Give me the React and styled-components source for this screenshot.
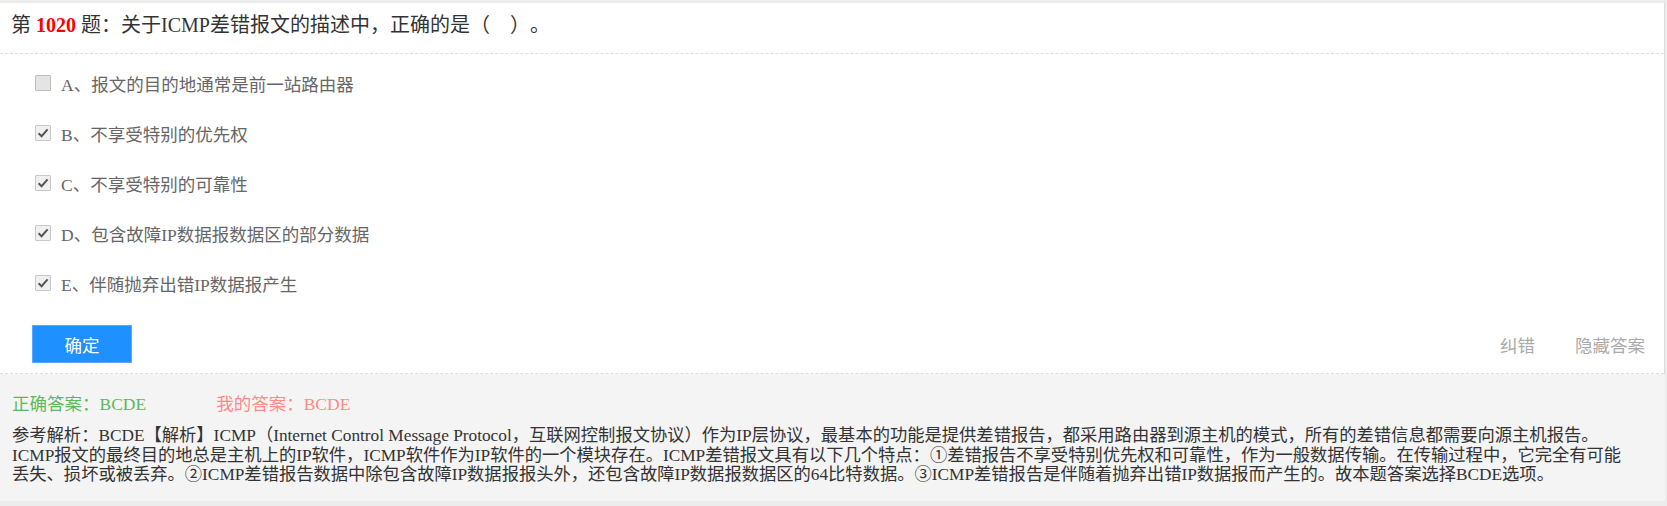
import React from "react";
import styled, { createGlobalStyle } from "styled-components";

const GlobalStyle = createGlobalStyle`
  html, body {
    margin: 0;
    padding: 0;
    background: #ececec;
  }
  body {
    font-family: "Liberation Serif", "Noto Sans CJK SC", serif;
    text-spacing-trim: space-all;
  }
`;

const Page = styled.div`
  padding: 3px 2px 0 0;
  width: 1667px;
  box-sizing: border-box;
`;

const Card = styled.div`
  background: #fff;
  border-right: 1px solid #dcdcdc;
`;

const TitleRow = styled.div`
  height: 51px;
  box-sizing: border-box;
  padding: 12px 11px 0;
  font-size: 20px;
  line-height: 20px;
  color: #333;
  border-bottom: 1px dashed #dedede;
  white-space: pre;
`;

const QuestionNo = styled.b`
  color: #ff0000;
  font-weight: bold;
`;

const OptionList = styled.div`
  padding: 4px 0 1px 35px;
`;

const Option = styled.label`
  display: flex;
  align-items: center;
  gap: 10px;
  height: 50px;
  font-size: 17.5px;
  color: #666;
`;

const Box = styled.span`
  display: inline-flex;
  align-items: center;
  justify-content: center;
  width: 14px;
  height: 14px;
  border: 1px solid ${props => (props.checked ? "#c8c8c8" : "#bdbdbd")};
  background: ${props => (props.checked ? "#f0f0f0" : "#e4e4e4")};
  border-radius: 1px;
  flex: none;
`;

const Footer = styled.div`
  display: flex;
  align-items: center;
  justify-content: space-between;
  padding: 16px 19px 10px 32px;
  border-bottom: 1px dashed #dedede;
`;

const SubmitButton = styled.button`
  width: 100px;
  height: 38px;
  background: #1e90ff;
  border: 1px solid #59a9ff;
  color: #fff;
  font-size: 17.5px;
  font-family: "Noto Sans CJK SC", sans-serif;
  padding: 0;
  cursor: pointer;
`;

const Links = styled.div`
  display: flex;
  gap: 40px;
`;

const LinkText = styled.span`
  color: #aaa;
  font-size: 17.5px;
  font-family: "Noto Sans CJK SC", sans-serif;
  cursor: pointer;
`;

const AnswerSection = styled.div`
  background: #f4f4f4;
  padding: 19px 12px 16px 12px;
`;

const AnswerRow = styled.div`
  display: flex;
  gap: 70px;
  font-size: 17.5px;
  line-height: 22px;
  margin-bottom: 11px;
`;

const AnswerText = styled.span`
  color: ${props => props.color};
`;

const Analysis = styled.div`
  font-size: 17.3px;
  line-height: 19.5px;
  color: #333;
`;

const AnalysisLine = styled.div`
  white-space: nowrap;
`;

const Check = () => (
  <svg width="12" height="12" viewBox="0 0 12 12">
    <path
      d="M1.6 6.2 L4.6 9.2 L10.6 2.4"
      fill="none"
      stroke="#555"
      strokeWidth="2"
    />
  </svg>
);

const options = [
  { key: "A", text: "报文的目的地通常是前一站路由器", checked: false },
  { key: "B", text: "不享受特别的优先权", checked: true },
  { key: "C", text: "不享受特别的可靠性", checked: true },
  { key: "D", text: "包含故障IP数据报数据区的部分数据", checked: true },
  { key: "E", text: "伴随抛弃出错IP数据报产生", checked: true }
];

// the analysis wraps at these points in the original page
const analysisLines = [
  "参考解析：BCDE【解析】ICMP（Internet Control Message Protocol，互联网控制报文协议）作为IP层协议，最基本的功能是提供差错报告，都采用路由器到源主机的模式，所有的差错信息都需要向源主机报告。",
  "ICMP报文的最终目的地总是主机上的IP软件，ICMP软件作为IP软件的一个模块存在。ICMP差错报文具有以下几个特点：①差错报告不享受特别优先权和可靠性，作为一般数据传输。在传输过程中，它完全有可能",
  "丢失、损坏或被丢弃。②ICMP差错报告数据中除包含故障IP数据报报头外，还包含故障IP数据报数据区的64比特数据。③ICMP差错报告是伴随着抛弃出错IP数据报而产生的。故本题答案选择BCDE选项。"
];

const App = () => (
  <Page>
    <GlobalStyle />
    <Card>
      <TitleRow>
        第 <QuestionNo>1020</QuestionNo> 题：关于ICMP差错报文的描述中，正确的是（　）。
      </TitleRow>
      <OptionList>
        {options.map(o => (
          <Option key={o.key}>
            <Box checked={o.checked}>{o.checked && <Check />}</Box>
            <span>
              {o.key}、{o.text}
            </span>
          </Option>
        ))}
      </OptionList>
      <Footer>
        <SubmitButton>确定</SubmitButton>
        <Links>
          <LinkText>纠错</LinkText>
          <LinkText>隐藏答案</LinkText>
        </Links>
      </Footer>
    </Card>
    <AnswerSection>
      <AnswerRow>
        <AnswerText color="#5cb85c">正确答案：BCDE</AnswerText>
        <AnswerText color="#ff8a8a">我的答案：BCDE</AnswerText>
      </AnswerRow>
      <Analysis>
        {analysisLines.map((line, i) => (
          <AnalysisLine key={i}>{line}</AnalysisLine>
        ))}
      </Analysis>
    </AnswerSection>
  </Page>
);

export default App;
